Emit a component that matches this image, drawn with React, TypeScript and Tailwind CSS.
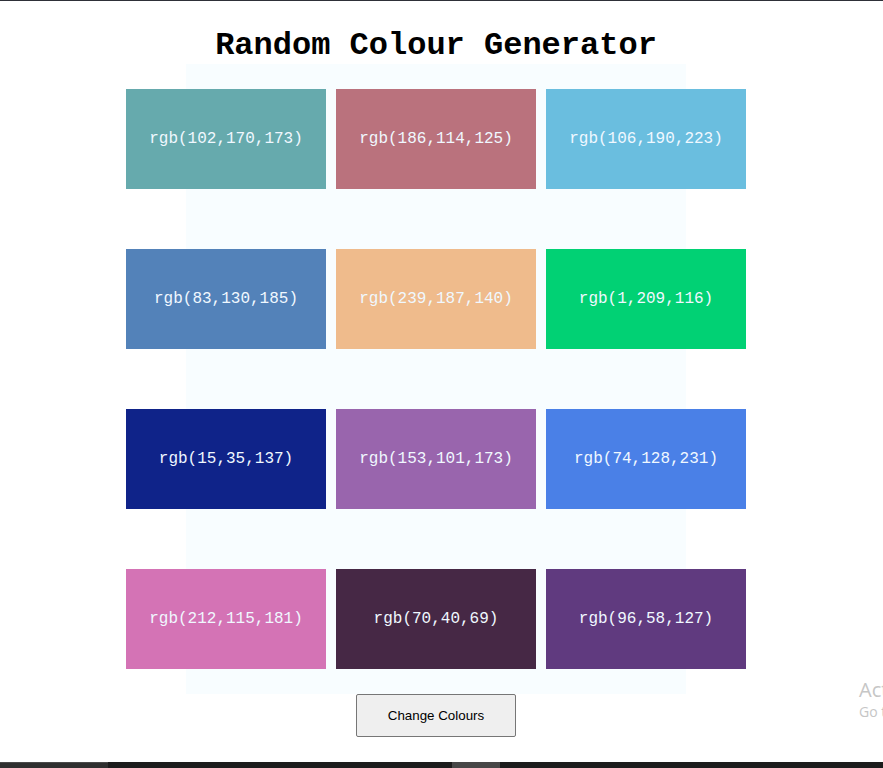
import { useState } from "react";

const START = [
  "rgb(102,170,173)",
  "rgb(186,114,125)",
  "rgb(106,190,223)",
  "rgb(83,130,185)",
  "rgb(239,187,140)",
  "rgb(1,209,116)",
  "rgb(15,35,137)",
  "rgb(153,101,173)",
  "rgb(74,128,231)",
  "rgb(212,115,181)",
  "rgb(70,40,69)",
  "rgb(96,58,127)",
];

function randomColour() {
  const c = () => Math.floor(Math.random() * 256);
  return `rgb(${c()},${c()},${c()})`;
}

export default function App() {
  const [colours, setColours] = useState(START);

  const changeColours = () => {
    setColours(colours.map(() => randomColour()));
  };

  return (
    <div className="relative h-[768px] w-[883px] overflow-hidden bg-white flex flex-col border-t border-[#2e3038]">
      <div className="w-[872px] flex flex-col items-center">
        <h1 className="pt-[27px] text-[32px] leading-[36px] font-bold text-black font-['Liberation_Mono',monospace]">
          Random Colour Generator
        </h1>
        <div className="w-[500px] h-[630px] bg-[#f8fdff] flex justify-center py-[25px]">
          <div className="grid grid-cols-[200px_200px_200px] gap-x-[10px] gap-y-[60px] shrink-0 w-[620px]">
            {colours.map((c, i) => (
              <div
                key={i}
                className="h-[100px] flex items-center justify-center text-[16px] text-[#f0f8ff] font-['Liberation_Mono',monospace]"
                style={{ backgroundColor: c }}
              >
                {c}
              </div>
            ))}
          </div>
        </div>
        <button
          onClick={changeColours}
          className="w-[160px] h-[43px] bg-[#efefef] border border-[#767676] rounded-[2px] text-[13.333px] text-black font-['Liberation_Sans',Arial,sans-serif]"
        >
          Change Colours
        </button>
      </div>

      <div className="mt-auto h-[6px] flex bg-[#1c1c1c]">
        <div className="w-[108px] bg-[#2f2f2f] border-t border-[#4a4a4a]" />
        <div className="w-[344px]" />
        <div className="w-[48px] bg-[#474747]" />
      </div>

      <div className="absolute left-[859px] top-[676px] whitespace-nowrap text-[#c6c6c6] font-['Open_Sans',sans-serif]">
        <div className="text-[20px] leading-[26px]">Activate Windows</div>
        <div className="text-[14px] leading-[18px]">Go to Settings to activate Windows.</div>
      </div>
    </div>
  );
}
